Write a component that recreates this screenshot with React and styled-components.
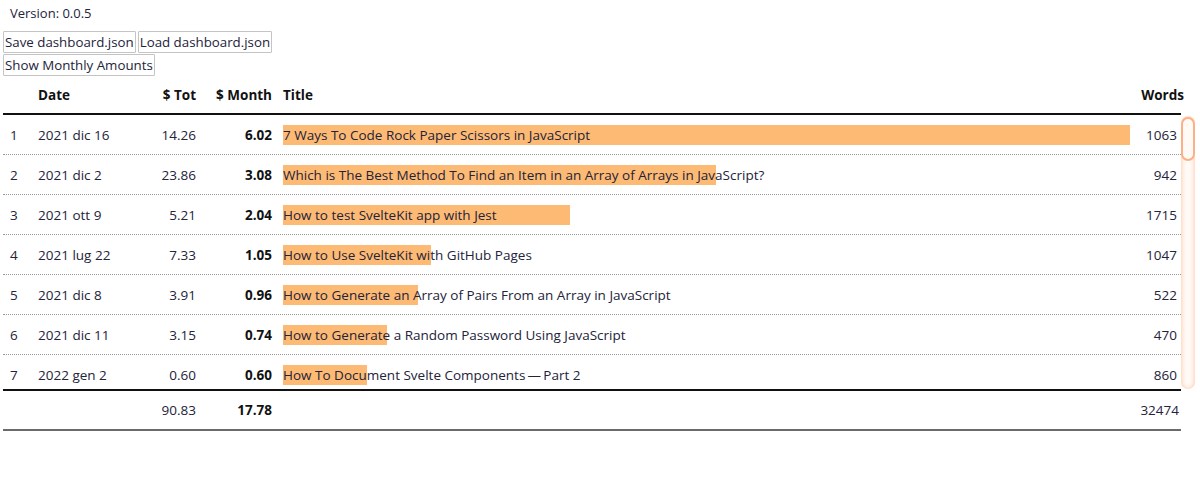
import React from 'react';
import styled, { createGlobalStyle } from 'styled-components';

const GlobalStyle = createGlobalStyle`
  body {
    margin: 0;
    background: #fff;
    color: #23233a;
    font-family: "Open Sans", "Noto Sans", "Liberation Sans", sans-serif;
    font-size: 13.5px;
  }
`;

const Page = styled.div`
  padding: 0 3px;
`;

const Version = styled.div`
  height: 26px;
  line-height: 26px;
  padding-left: 7px;
  margin-bottom: 5px;
  font-size: 13px;
`;

const ButtonRow = styled.div`
  display: flex;
  gap: 2px;
  & + & {
    margin-top: 1px;
  }
`;

const Button = styled.button`
  height: 22px;
  padding: 0 1px;
  background: #fff;
  border: 1px solid #c4c4c4;
  border-radius: 1px;
  font-family: inherit;
  font-size: 13.3px;
  color: #23233a;
  cursor: pointer;
`;

const cols = '32px 105px 60px 76px 1fr 51px';

const Row = styled.div`
  display: grid;
  grid-template-columns: ${cols};
  align-items: center;
  width: 1178px;
  height: ${(p) => p.$h || 40}px;
  box-sizing: border-box;
  border-bottom: ${(p) => p.$line || 'none'};
`;

const Head = styled(Row)`
  font-weight: 700;
  color: #111;
`;

const Cell = styled.div`
  padding: ${(p) => p.$pad || '0 4px'};
  text-align: ${(p) => (p.$right ? 'right' : 'left')};
  font-weight: ${(p) => (p.$bold ? 700 : 'inherit')};
  color: ${(p) => (p.$bold ? '#111' : 'inherit')};
  white-space: nowrap;
`;

const BodyWrap = styled.div`
  position: relative;
  width: 1178px;
  border-bottom: 2px solid #111;
`;

const Body = styled.div`
  height: 274px;
  overflow-y: auto;
  scrollbar-width: none;
  &::-webkit-scrollbar {
    display: none;
  }
`;

/* the native scrollbar does not show up in the shot, so it is drawn */
const Track = styled.div`
  position: absolute;
  top: 1px;
  right: -14px;
  bottom: 0;
  width: 14px;
  border-radius: 7px;
  box-shadow: inset 0 0 4px rgba(253, 165, 110, 0.6);
  background: linear-gradient(to right, rgba(253, 186, 140, 0.18), rgba(253, 186, 140, 0.05), rgba(253, 186, 140, 0.18));
  pointer-events: none;
`;

const Thumb = styled.div`
  position: absolute;
  top: 1px;
  left: 0;
  width: 14px;
  height: 44px;
  box-sizing: border-box;
  border-radius: 8px;
  border: 2px solid #fdb084;
  background: #fffaf6;
`;

const TitleCell = styled.div`
  position: relative;
  padding-left: 7px;
  height: 20px;
  display: flex;
  align-items: center;
  white-space: nowrap;
`;

const Bar = styled.div`
  position: absolute;
  left: 7px;
  top: 0;
  height: 20px;
  background: #fdba74;
`;

const TitleText = styled.span`
  position: relative;
`;

const Footer = styled(Row)`
  border-bottom: 2px solid #6b6b6b;
`;

const rows = [
  ['2021 dic 16', '14.26', 6.02, '7 Ways To Code Rock Paper Scissors in JavaScript', 1063],
  ['2021 dic 2', '23.86', 3.08, 'Which is The Best Method To Find an Item in an Array of Arrays in JavaScript?', 942],
  ['2021 ott 9', '5.21', 2.04, 'How to test SvelteKit app with Jest', 1715],
  ['2021 lug 22', '7.33', 1.05, 'How to Use SvelteKit with GitHub Pages', 1047],
  ['2021 dic 8', '3.91', 0.96, 'How to Generate an Array of Pairs From an Array in JavaScript', 522],
  ['2021 dic 11', '3.15', 0.74, 'How to Generate a Random Password Using JavaScript', 470],
  ['2022 gen 2', '0.60', 0.6, 'How To Document Svelte Components\u2009\u2014\u2009Part 2', 860],
  ['2021 nov 20', '2.41', 0.55, 'How To Create A Dark Mode Toggle In Svelte', 812],
  ['2021 set 14', '4.12', 0.51, 'How to Build a Simple Svelte Store', 905],
  ['2021 ago 3', '3.87', 0.47, 'Svelte Transitions And Animations', 733],
  ['2021 giu 18', '2.96', 0.42, 'How To Use Electron With Svelte', 1120],
  ['2021 mag 29', '2.31', 0.39, 'How To Fetch Data In Svelte', 640],
  ['2021 nov 5', '1.88', 0.36, 'How To Sort An Array Of Objects In JavaScript', 590],
  ['2021 ott 23', '1.74', 0.33, 'How To Use Svelte Actions', 701],
  ['2021 set 1', '1.62', 0.3, 'How To Write Unit Tests In JavaScript', 844],
  ['2021 lug 9', '1.48', 0.28, 'How To Create A Custom Event In Svelte', 615],
  ['2021 giu 2', '1.29', 0.25, 'How To Use Svelte Context API', 760],
  ['2021 mag 12', '1.12', 0.23, 'How To Add Tailwind To SvelteKit', 520],
  ['2021 apr 27', '0.98', 0.21, 'How To Deploy A Svelte App', 688],
  ['2021 apr 8', '0.87', 0.19, 'How To Use Slots In Svelte', 574],
  ['2021 mar 21', '0.79', 0.17, 'How To Create A Modal In Svelte', 630],
  ['2021 mar 2', '0.71', 0.16, 'How To Use Svelte With TypeScript', 812],
  ['2021 feb 14', '0.64', 0.14, 'How To Debounce In JavaScript', 498],
  ['2021 feb 1', '0.55', 0.13, 'How To Read A JSON File In JavaScript', 540],
  ['2021 gen 18', '0.49', 0.12, 'How To Copy Text To Clipboard', 455],
  ['2021 gen 4', '0.44', 0.11, 'How To Format Dates In JavaScript', 602],
  ['2020 dic 20', '0.39', 0.1, 'How To Use Local Storage In Svelte', 571],
  ['2020 dic 6', '0.35', 0.09, 'How To Build A Todo App In Svelte', 923],
  ['2020 nov 22', '0.31', 0.08, 'How To Make A Countdown Timer', 480],
  ['2020 nov 8', '0.27', 0.07, 'How To Use Promises In JavaScript', 715],
  ['2020 ott 25', '0.24', 0.06, 'How To Create Tabs In Svelte', 510],
  ['2020 ott 11', '0.21', 0.05, 'How To Use Async Await', 660],
  ['2020 set 27', '0.18', 0.05, 'How To Filter An Array In JavaScript', 430],
  ['2020 set 13', '0.15', 0.04, 'How To Use Svelte Stores', 590],
  ['2020 ago 30', '0.13', 0.04, 'How To Build A Markdown Editor', 875],
  ['2020 ago 16', '0.11', 0.03, 'How To Use Regular Expressions', 620],
  ['2020 ago 2', '0.09', 0.03, 'How To Create A Chart In Svelte', 740],
  ['2020 lug 19', '0.07', 0.02, 'How To Use Map And Set', 515],
  ['2020 lug 5', '0.05', 0.02, 'How To Generate Random Numbers', 450],
  ['2020 giu 21', '0.04', 0.01, 'How To Parse CSV In JavaScript', 690],
  ['2020 giu 7', '0.03', 0.01, 'How To Build A Svelte Component Library', 810],
  ['2020 mag 24', '0.02', 0.01, 'How To Use Web Workers', 560],
  ['2020 mag 10', '0.01', 0.01, 'Hello World', 300],
];

const MAX_BAR = 847;
const maxMonth = rows[0][2];

export default function App() {
  return (
    <Page>
      <GlobalStyle />
      <Version>Version: 0.0.5</Version>
      <ButtonRow>
        <Button>Save dashboard.json</Button>
        <Button>Load dashboard.json</Button>
      </ButtonRow>
      <ButtonRow>
        <Button>Show Monthly Amounts</Button>
      </ButtonRow>

      <Head $h={39} $line="2px solid #111">
        <Cell />
        <Cell $pad="0 3px">Date</Cell>
        <Cell $right>$ Tot</Cell>
        <Cell $right>$ Month</Cell>
        <Cell $pad="0 7px">Title</Cell>
        <Cell $right $pad="0" style={{ marginRight: -3 }}>Words</Cell>
      </Head>

      <BodyWrap>
        <Body>
          {rows.map((r, i) => (
            <Row key={i} $line="1px dotted #9a9a9a">
              <Cell $pad="0 7px">{i + 1}</Cell>
              <Cell $pad="0 3px">{r[0]}</Cell>
              <Cell $right>{r[1]}</Cell>
              <Cell $right $bold>{r[2].toFixed(2)}</Cell>
              <TitleCell>
                <Bar style={{ width: (r[2] / maxMonth) * MAX_BAR }} />
                <TitleText>{r[3]}</TitleText>
              </TitleCell>
              <Cell $right>{r[4]}</Cell>
            </Row>
          ))}
        </Body>
        <Track>
          <Thumb />
        </Track>
      </BodyWrap>

      <Footer $h={40}>
        <Cell />
        <Cell />
        <Cell $right>90.83</Cell>
        <Cell $right $bold>17.78</Cell>
        <Cell />
        <Cell $right $pad="0 2px 0 0">32474</Cell>
      </Footer>
    </Page>
  );
}
